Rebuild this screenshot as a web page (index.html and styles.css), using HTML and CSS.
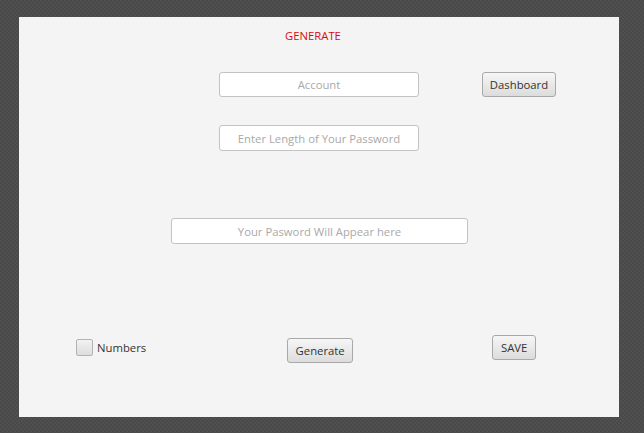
FILE: index.html
```html
<!DOCTYPE html>
<html>
<head>
<meta charset="utf-8">
<link rel="stylesheet" href="styles.css">
</head>
<body>
<div class="window">
  <div class="title-row"><span class="title">GENERATE</span></div>
  <div class="row row-account">
    <input class="field field-account" type="text" placeholder="Account">
    <button class="btn btn-dashboard">Dashboard</button>
  </div>
  <div class="row row-length">
    <input class="field field-length" type="text" placeholder="Enter Length of Your Password">
  </div>
  <div class="row row-output">
    <input class="field field-output" type="text" placeholder="Your Pasword Will Appear here">
  </div>
  <div class="row row-bottom">
    <label class="check">
      <span class="box"></span>
      <span class="check-label">Numbers</span>
    </label>
    <button class="btn btn-generate">Generate</button>
    <button class="btn btn-save">SAVE</button>
  </div>
</div>
</body>
</html>
```
FILE: styles.css
```css
html, body {
  margin: 0;
  padding: 0;
}
body {
  width: 644px;
  height: 433px;
  overflow: hidden;
  background-color: #4b4b4b;
  background-image: repeating-conic-gradient(#494949 0 25%, #505050 0 50%);
  background-size: 4px 4px;
  font-family: "Open Sans", "Noto Sans", sans-serif;
  font-size: 11.3px;
  padding-top: 17px;
  box-sizing: border-box;
}
.window {
  margin-left: 19px;
  width: 600px;
  height: 400px;
  background: #f4f4f4;
  display: flex;
  flex-direction: column;
}
.title-row {
  padding-top: 11px;
  padding-left: 266px;
  height: 16px;
  line-height: 16px;
}
.title {
  color: #d50c0c;
  font-size: 11.3px;
}
.row {
  display: flex;
  align-items: flex-start;
}
.row-account {
  margin-top: 28px;
  padding-left: 200px;
}
.row-length {
  margin-top: 28px;
  padding-left: 200px;
}
.row-output {
  margin-top: 67px;
  padding-left: 152px;
}
.row-bottom {
  margin-top: 91px;
  padding-left: 57px;
}
.field {
  box-sizing: border-box;
  height: 25px;
  border: 1px solid #c3c3c3;
  border-radius: 3px;
  background: #ffffff;
  font-family: "Open Sans", "Noto Sans", sans-serif;
  font-size: 11.3px;
  text-align: center;
  color: #333;
  padding: 0 6px;
  margin: 0;
  outline: none;
}
.field::placeholder {
  color: #a9a9a9;
}
.field-account { width: 200px; }
.field-length { width: 200px; height: 26px; }
.field-output { width: 297px; height: 26px; }
.btn {
  box-sizing: border-box;
  height: 25px;
  border: 1px solid #a9a9a9;
  border-radius: 3px;
  background: linear-gradient(#f6f6f6, #dcdcdc);
  font-family: "Open Sans", "Noto Sans", sans-serif;
  font-size: 11.3px;
  color: #333;
  padding: 0;
  margin: 0;
  line-height: 23px;
  text-align: center;
}
.btn-dashboard {
  margin-left: 63px;
  width: 74px;
}
.check {
  display: flex;
  align-items: center;
  margin-top: 4px;
}
.box {
  box-sizing: border-box;
  width: 17px;
  height: 17px;
  border: 1px solid #b3b3b3;
  border-radius: 2px;
  background: linear-gradient(#f2f2f2, #dddddd);
}
.check-label {
  margin-left: 4px;
  color: #333;
  line-height: 17px;
}
.btn-generate {
  margin-top: 3px;
  margin-left: 141px;
  width: 66px;
}
.btn-save {
  margin-left: 139px;
  width: 44px;
}
```
